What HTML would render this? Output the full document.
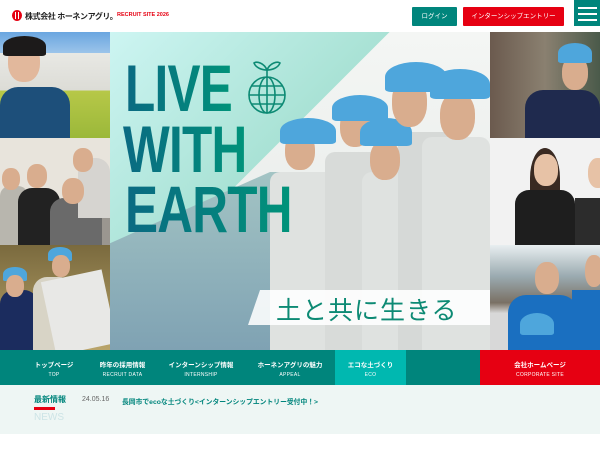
<!DOCTYPE html>
<html><head><meta charset="utf-8"><style>
*{margin:0;padding:0;box-sizing:border-box}
body{width:600px;height:450px;overflow:hidden;background:#fff;font-family:"Liberation Sans","Noto Sans CJK JP",sans-serif;position:relative}
.a{position:absolute}
.hd{top:0;left:0;width:600px;height:32px;background:#fff}
.ph{overflow:hidden}
.nav{top:350px;left:0;width:600px;height:35px;background:#00857c}
.ni{position:absolute;top:0;height:35px;color:#fff;text-align:center;font-weight:bold;font-size:6.5px;padding-top:9px}
.ni span{display:block;font-weight:normal;font-size:5px;margin-top:3px;letter-spacing:.3px}
.big{font-weight:bold;font-size:66px;line-height:60px;transform:scaleX(.75);transform-origin:0 0;letter-spacing:-1px;background:linear-gradient(90deg,#0a6a82,#00937a);-webkit-background-clip:text;color:transparent}
.w{background:#dfe2e0;border-radius:10px 10px 0 0}
.helm{background:#4ea6dc;border-radius:50% 50% 10% 10%}
.face{background:#d9ad8e;border-radius:45%}
</style></head><body>
<div class="a hd">
 <div class="a" style="left:12px;top:10px;width:10px;height:11px;border-radius:50%;background:#e60012"></div>
 <div class="a" style="left:15px;top:12px;width:4px;height:7px;border-left:1.5px solid #fff;border-right:1.5px solid #fff"></div>
 <div class="a" style="left:25px;top:11px;font-size:8px;font-weight:bold;color:#222;letter-spacing:-.4px">株式会社 ホーネンアグリ。</div>
 <div class="a" style="left:117px;top:12px;font-size:5.5px;font-weight:bold;color:#e60012">RECRUIT SITE 2026</div>
 <div class="a" style="left:412px;top:7px;width:45px;height:19px;background:#00857c;color:#fff;font-size:6.5px;text-align:center;line-height:19px;border-radius:1px">ログイン</div>
 <div class="a" style="left:463px;top:7px;width:101px;height:19px;background:#e60012;color:#fff;font-size:6.5px;text-align:center;line-height:19px;border-radius:1px">インターンシップエントリー</div>
 <div class="a" style="left:574px;top:0;width:26px;height:26px;background:#00857c"></div>
 <div class="a" style="left:578px;top:7px;width:19px;height:2px;background:#fff;box-shadow:0 6px 0 #fff,0 12px 0 #fff"></div>
</div>
<div class="a ph" style="left:0;top:32px;width:110px;height:106px;background:linear-gradient(#6aa6e0 0,#9cc4ea 20%,#e8e8e4 20%,#dcdcd6 55%,#b7c848 55%,#9bb83a)">
 <div class="a face" style="left:8px;top:10px;width:32px;height:40px;background:#e2b89c"></div>
 <div class="a" style="left:3px;top:4px;width:43px;height:20px;background:#1c1a1a;border-radius:50% 50% 10% 10%"></div>
 <div class="a" style="left:0;top:55px;width:70px;height:55px;background:#1d4f7a;border-radius:18px 18px 0 0"></div>
</div>
<div class="a ph" style="left:0;top:138px;width:110px;height:107px;background:#e8e4dc">
 <div class="a" style="left:0;top:80px;width:110px;height:30px;background:#9a9690"></div>
 <div class="a" style="left:0;top:48px;width:28px;height:60px;background:#b8b6ae;border-radius:10px 10px 0 0"></div>
 <div class="a" style="left:18px;top:50px;width:42px;height:60px;background:#222;border-radius:14px 14px 0 0"></div>
 <div class="a" style="left:50px;top:60px;width:52px;height:50px;background:#6a6a6a;border-radius:14px 14px 0 0"></div>
 <div class="a" style="left:78px;top:20px;width:32px;height:60px;background:#d6d4d0;border-radius:14px 14px 0 0"></div>
 <div class="a face" style="left:27px;top:26px;width:20px;height:24px"></div>
 <div class="a face" style="left:62px;top:40px;width:22px;height:26px"></div>
 <div class="a face" style="left:73px;top:10px;width:20px;height:24px"></div>
 <div class="a face" style="left:2px;top:30px;width:18px;height:22px"></div>
</div>
<div class="a ph" style="left:0;top:245px;width:110px;height:105px;background:linear-gradient(#7a6a3e,#b9a46a)">
 <div class="a" style="left:0;top:45px;width:38px;height:60px;background:#1b2c5e;border-radius:14px 14px 0 0"></div>
 <div class="a" style="left:33px;top:32px;width:40px;height:73px;background:#d8d4c6;border-radius:14px 14px 0 0"></div>
 <div class="a" style="left:48px;top:30px;width:62px;height:75px;background:#e8e8e6;transform:rotate(-12deg)"></div>
 <div class="a helm" style="left:3px;top:22px;width:24px;height:14px"></div>
 <div class="a face" style="left:6px;top:30px;width:18px;height:22px"></div>
 <div class="a helm" style="left:48px;top:2px;width:24px;height:14px"></div>
 <div class="a face" style="left:52px;top:10px;width:18px;height:22px"></div>
</div>
<div class="a ph" style="left:110px;top:32px;width:380px;height:318px;background:linear-gradient(180deg,#f4f6f4,#e4e8e6)">
 <div class="a" style="left:0;top:0;width:380px;height:318px;background:linear-gradient(135deg,#cdf5f2 0,#a9e2d5 40%,transparent 40.1%)"></div>
 <div class="a" style="left:0;top:140px;width:250px;height:178px;background:linear-gradient(180deg,#a3c4c4,#7fa2b3);clip-path:polygon(0 40%,160px 0,250px 0,250px 100%,0 100%)"></div>
 <div class="a w" style="left:160px;top:140px;width:72px;height:180px"></div>
 <div class="a w" style="left:215px;top:120px;width:70px;height:200px;background:#d8dbd9"></div>
 <div class="a w" style="left:252px;top:140px;width:55px;height:180px"></div>
 <div class="a w" style="left:288px;top:100px;width:60px;height:220px;background:#d6d9d7"></div>
 <div class="a w" style="left:312px;top:105px;width:68px;height:215px"></div>
 <div class="a face" style="left:175px;top:100px;width:30px;height:38px"></div>
 <div class="a helm" style="left:170px;top:86px;width:56px;height:26px"></div>
 <div class="a face" style="left:230px;top:75px;width:30px;height:40px"></div>
 <div class="a helm" style="left:222px;top:63px;width:56px;height:26px"></div>
 <div class="a face" style="left:260px;top:108px;width:30px;height:40px"></div>
 <div class="a helm" style="left:250px;top:86px;width:52px;height:28px"></div>
 <div class="a face" style="left:282px;top:45px;width:35px;height:50px"></div>
 <div class="a helm" style="left:275px;top:30px;width:62px;height:30px"></div>
 <div class="a face" style="left:330px;top:60px;width:35px;height:48px"></div>
 <div class="a helm" style="left:320px;top:37px;width:60px;height:30px"></div>
 <div class="a big" style="left:15px;top:26px">LIVE</div>
 <div class="a big" style="left:13px;top:87px">WITH</div>
 <div class="a big" style="left:15px;top:147px">EARTH</div>
 <svg class="a" style="left:137px;top:27px" width="42" height="56" viewBox="0 0 42 56">
  <g fill="none" stroke="#0d8a74" stroke-width="1.6">
   <circle cx="20" cy="36" r="18"/><ellipse cx="20" cy="36" rx="8" ry="18"/>
   <line x1="20" y1="18" x2="20" y2="54"/><line x1="2" y1="36" x2="38" y2="36"/>
   <path d="M5 27H35M5 45H35"/><path d="M20 18V10"/>
   <path d="M20 11C17 4 10 2 7 4C9 9 15 11 20 11Z"/><path d="M20 11C23 4 30 2 33 4C31 9 25 11 20 11Z"/>
  </g></svg>
 <div class="a" style="left:138px;top:258px;width:250px;height:35px;background:rgba(255,255,255,.88);clip-path:polygon(12px 0,100% 0,100% 100%,0 100%)"></div>
 <div class="a" style="left:166px;top:259px;font-size:25px;color:#0d8a74;letter-spacing:1px;font-family:'Noto Sans CJK JP',sans-serif">土と共に生きる</div>
</div>
<div class="a ph" style="left:490px;top:32px;width:110px;height:106px;background:linear-gradient(90deg,#6b5a4e,#8a8070 50%,#4a5a4a)">
 <div class="a" style="left:35px;top:58px;width:75px;height:50px;background:#1f2a4e;border-radius:18px 18px 0 0"></div>
 <div class="a face" style="left:72px;top:24px;width:26px;height:34px"></div>
 <div class="a helm" style="left:68px;top:11px;width:34px;height:20px"></div>
</div>
<div class="a ph" style="left:490px;top:138px;width:110px;height:107px;background:#f2f2f2">
 <div class="a" style="left:40px;top:10px;width:30px;height:60px;background:#3a2a22;border-radius:50% 50% 20% 20%"></div>
 <div class="a face" style="left:44px;top:16px;width:24px;height:32px;background:#e7c2a6"></div>
 <div class="a" style="left:25px;top:52px;width:60px;height:55px;background:#1e1e1e;border-radius:14px 14px 0 0"></div>
 <div class="a" style="left:85px;top:60px;width:25px;height:47px;background:#2c2c2c"></div>
 <div class="a face" style="left:98px;top:20px;width:20px;height:30px;background:#e7c2a6"></div>
</div>
<div class="a ph" style="left:490px;top:245px;width:110px;height:105px;background:linear-gradient(#e8eef0 0,#9aaab0 30%,#7a7064 55%,#d8d8d8 65%)">
 <div class="a" style="left:18px;top:50px;width:70px;height:60px;background:#1a6fc0;border-radius:18px 18px 0 0"></div>
 <div class="a face" style="left:45px;top:17px;width:24px;height:32px"></div>
 <div class="a" style="left:82px;top:45px;width:28px;height:60px;background:#1a6fc0"></div>
 <div class="a face" style="left:95px;top:10px;width:18px;height:32px"></div>
 <div class="a helm" style="left:30px;top:68px;width:34px;height:22px"></div>
</div>
<div class="a nav">
 <div class="ni" style="left:20px;width:68px">トップページ<span>TOP</span></div>
 <div class="ni" style="left:90px;width:65px">昨年の採用情報<span>RECRUIT DATA</span></div>
 <div class="ni" style="left:160px;width:82px">インターンシップ情報<span>INTERNSHIP</span></div>
 <div class="ni" style="left:248px;width:84px">ホーネンアグリの魅力<span>APPEAL</span></div>
 <div class="ni" style="left:335px;width:71px;background:#00b8b0">エコな土づくり<span>ECO</span></div>
 <div class="ni" style="left:480px;width:120px;background:#e60012">会社ホームページ<span>CORPORATE SITE</span></div>
</div>
<div class="a" style="left:0;top:385px;width:600px;height:49px;background:#eef6f4">
 <div class="a" style="left:34px;top:9px;font-size:8px;font-weight:bold;color:#00857c">最新情報</div>
 <div class="a" style="left:34px;top:22px;width:21px;height:3px;background:#e60012"></div>
 <div class="a" style="left:34px;top:27px;font-size:10px;color:#cde4e6">NEWS</div>
 <div class="a" style="left:82px;top:11px;font-size:7px;color:#666">24.05.16</div>
 <div class="a" style="left:122px;top:11px;font-size:6.8px;font-weight:bold;color:#00857c">長岡市でecoな土づくり&lt;インターンシップエントリー受付中！&gt;</div>
</div>
</body></html>
